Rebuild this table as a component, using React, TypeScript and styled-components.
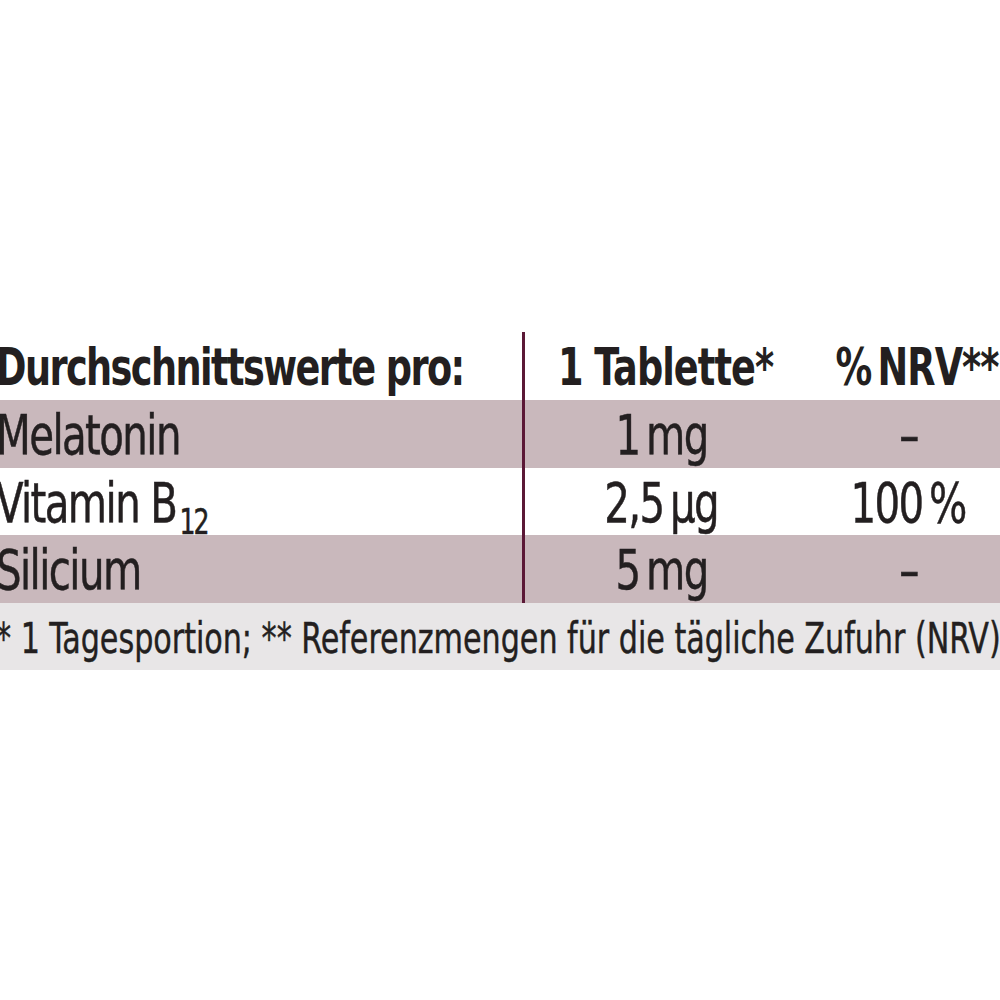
import React from 'react';
import styled, { createGlobalStyle } from 'styled-components';

const GlobalStyle = createGlobalStyle`
  html, body {
    margin: 0;
    padding: 0;
    background: #ffffff;
    overflow: hidden;
  }
  body {
    width: 1000px;
    height: 1000px;
  }
`;

// no condensed face as narrow as the print typeface, so squeeze the glyphs a bit
const FONT = `"DejaVu Sans Condensed", "Liberation Sans Narrow", "DejaVu Sans", sans-serif`;

const rows = [
  { name: 'Melatonin', sub: '', amount: '1\u2009mg', nrv: '–', shaded: true },
  { name: 'Vitamin B', sub: '12', amount: '2,5\u2009µg', nrv: '100\u2009%', shaded: false },
  { name: 'Silicium', sub: '', amount: '5\u2009mg', nrv: '–', shaded: true },
];

const App = () => {
  return (
    <>
      <GlobalStyle />
      <Page>
        <Table>
          <HeadRow>
            <NameCell $bold>
              <Squeeze>Durchschnittswerte pro:</Squeeze>
            </NameCell>
            <ValueCell $bold $divider>
              <Squeeze $center>1 Tablette*</Squeeze>
            </ValueCell>
            <ValueCell $bold $nrv>
              <Squeeze $center>%&#8201;NRV**</Squeeze>
            </ValueCell>
          </HeadRow>
          {rows.map((r) => (
            <Row key={r.name} $shaded={r.shaded}>
              <NameCell>
                <Squeeze>
                  {r.name}
                  {r.sub && <Sub>{r.sub}</Sub>}
                </Squeeze>
              </NameCell>
              <ValueCell $divider>
                <Squeeze $center>{r.amount}</Squeeze>
              </ValueCell>
              <ValueCell $nrv>
                <Squeeze $center>{r.nrv}</Squeeze>
              </ValueCell>
            </Row>
          ))}
          <Footnote>
            <Squeeze>* 1 Tagesportion; ** Referenzmengen für die tägliche Zufuhr (NRV)</Squeeze>
          </Footnote>
        </Table>
      </Page>
    </>
  );
};

export default App;

const Page = styled.div`
  padding-top: 332px;
  margin-left: -4px;
  width: 1014px;
`;

const Table = styled.div`
  display: flex;
  flex-direction: column;
  font-family: ${FONT};
  color: #231f20;
`;

const Row = styled.div<{ $shaded?: boolean }>`
  display: grid;
  grid-template-columns: 526px 276px 1fr;
  height: 67.5px;
  background: ${({ $shaded }) => ($shaded ? '#c9b8bc' : '#ffffff')};
`;

const HeadRow = styled(Row)`
  grid-template-columns: 526px 284px 1fr;
  height: 68px;
`;

const Squeeze = styled.span<{ $center?: boolean }>`
  display: inline-block;
  transform: scaleX(0.8);
  transform-origin: ${({ $center }) => ($center ? 'center' : 'left')} center;
`;

const NameCell = styled.div<{ $bold?: boolean }>`
  font-size: ${({ $bold }) => ($bold ? '51px' : '56px')};
  font-weight: ${({ $bold }) => ($bold ? 700 : 400)};
  letter-spacing: ${({ $bold }) => ($bold ? '-2px' : '-2px')};
  -webkit-text-stroke: ${({ $bold }) => ($bold ? '0' : '0.5px #231f20')};
  line-height: 1;
  padding-top: ${({ $bold }) => ($bold ? '10px' : '7px')};
  white-space: nowrap;
`;

const ValueCell = styled.div<{ $bold?: boolean; $divider?: boolean; $nrv?: boolean }>`
  font-size: ${({ $bold }) => ($bold ? '51px' : '56px')};
  font-weight: ${({ $bold }) => ($bold ? 700 : 400)};
  letter-spacing: ${({ $bold }) => ($bold ? '-1.2px' : '-2px')};
  -webkit-text-stroke: ${({ $bold }) => ($bold ? '0' : '0.5px #231f20')};
  line-height: 1;
  padding-top: ${({ $bold }) => ($bold ? '10px' : '7px')};
  padding-left: ${({ $nrv }) => ($nrv ? '9px' : '0')};
  text-align: center;
  white-space: nowrap;
  border-left: ${({ $divider }) => ($divider ? '3px solid #5b1836' : 'none')};
`;

const Sub = styled.span`
  font-size: 35px;
  letter-spacing: -2.5px;
  position: relative;
  top: 12px;
  margin-left: 4px;
`;

const Footnote = styled.div`
  height: 67px;
  background: #e8e6e7;
  font-size: 42px;
  letter-spacing: -0.05px;
  -webkit-text-stroke: 0.4px #231f20;
  line-height: 1;
  padding-top: 15px;
  box-sizing: border-box;
  white-space: nowrap;
`;
